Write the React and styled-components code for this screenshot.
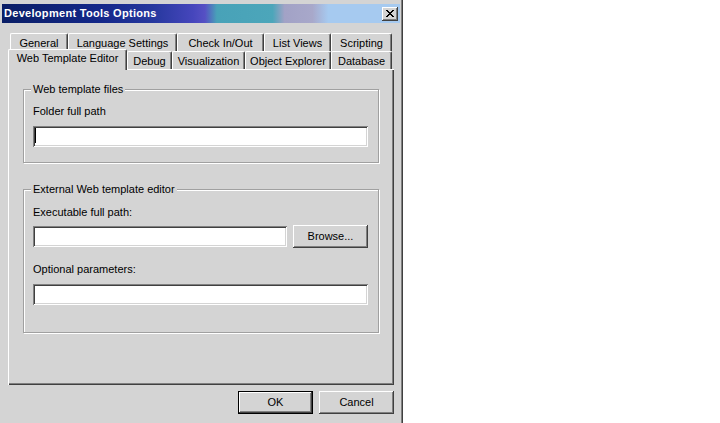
import React from "react";
import styled, { createGlobalStyle } from "styled-components";

const GRAY = "#d4d4d4";

const Global = createGlobalStyle`
  html, body { margin: 0; padding: 0; background: #fff; overflow: hidden; }
  body { font-family: "Liberation Sans", Arial, sans-serif; font-size: 11px; color: #000; }
`;

const Window = styled.div`
  box-sizing: border-box;
  width: 403px;
  height: 423px;
  background: ${GRAY};
  padding: 4px 3px 0 2px;
  box-shadow: inset -1px 0 #404040, inset -2px 0 #808080;
`;

const TitleBar = styled.div`
  height: 19px;
  display: flex;
  align-items: center;
  justify-content: space-between;
  padding: 0 2px;
  background: linear-gradient(
    90deg,
    #0a1e66 0%,
    #14288a 25%,
    #26389e 38%,
    #4646bc 48%,
    #5650c4 51%,
    #48a2b8 54%,
    #4ca6ba 68%,
    #a2a2c6 71%,
    #a8a8ca 78%,
    #a6caf0 82%,
    #a6caf0 100%
  );
`;

const TitleText = styled.span`
  color: #fff;
  font-weight: bold;
  font-size: 11px;
  letter-spacing: 0.3px;
  line-height: 13px;
  white-space: nowrap;
`;

const CloseButton = styled.div`
  width: 16px;
  height: 14px;
  box-sizing: border-box;
  background: ${GRAY};
  box-shadow: inset -1px -1px #404040, inset 1px 1px #fff, inset -2px -2px #808080;
  display: flex;
  align-items: center;
  justify-content: center;
  padding-right: 1px;
`;

const Body = styled.div`
  padding: 10px 6px 0 6px;
`;

const TabRow = styled.div`
  display: flex;
  align-items: flex-start;
  height: 18px;
  padding-left: 2px;
`;

const Tab = styled.div`
  box-sizing: border-box;
  flex: none;
  position: relative;
  width: ${(p) => (p.$active ? p.$w + 2 : p.$w)}px;
  height: ${(p) => (p.$active ? 21 : 18)}px;
  margin-top: ${(p) => (p.$active ? -2 : 0)}px;
  margin-left: ${(p) => (p.$active ? -2 : 0)}px;
  z-index: ${(p) => (p.$active ? 1 : 0)};
  background: ${GRAY};
  border-top: 1px solid #fff;
  border-left: 1px solid #fff;
  border-right: 1px solid #404040;
  box-shadow: inset -1px 0 #808080;
  border-radius: 2px 2px 0 0;
  padding-top: ${(p) => (p.$active ? 2 : 3)}px;
  text-align: center;
  line-height: 13px;
  white-space: nowrap;
`;

const Panel = styled.div`
  box-sizing: border-box;
  height: 316px;
  background: ${GRAY};
  box-shadow: inset 1px 1px #fff, inset -1px -1px #404040, inset -2px -2px #808080;
  padding: 20px 15px 0 15px;
`;

const Group = styled.div`
  box-sizing: border-box;
  width: 356px;
  border: 1px solid #a0a0a0;
  box-shadow: inset 1px 1px #fff, 1px 1px 0 #fff;
  padding: 0 10px ${(p) => p.$pb}px 9px;
  margin-top: ${(p) => p.$mt || 0}px;
`;

const Legend = styled.div`
  width: fit-content;
  margin: -7px 0 0 -2px;
  padding: 0 2px;
  background: ${GRAY};
  line-height: 13px;
  white-space: nowrap;
`;

const FieldLabel = styled.div`
  line-height: 13px;
  margin-top: ${(p) => p.$mt}px;
  white-space: nowrap;
`;

const FieldRow = styled.div`
  display: flex;
  align-items: center;
  gap: 6px;
  margin-top: ${(p) => p.$mt}px;
`;

const TextBox = styled.div`
  box-sizing: border-box;
  width: ${(p) => p.$w}px;
  height: 21px;
  margin-top: ${(p) => p.$mt || 0}px;
  background: #fff;
  box-shadow: inset 1px 1px #808080, inset -1px -1px #fff, inset 2px 2px #404040,
    inset -2px -2px ${GRAY};
  padding: 2px 0 0 2px;
`;

const Caret = styled.div`
  width: 1px;
  height: 15px;
  background: #000;
`;

const Button = styled.div`
  box-sizing: border-box;
  width: 75px;
  height: 23px;
  flex: none;
  background: ${GRAY};
  display: flex;
  align-items: center;
  justify-content: center;
  line-height: 13px;
  border: ${(p) => (p.$default ? "1px solid #000" : "none")};
  box-shadow: ${(p) =>
    p.$default
      ? "inset -1px -1px #404040, inset 1px 1px #fff, inset -2px -2px #808080"
      : "inset -1px -1px #404040, inset 1px 1px #fff, inset -2px -2px #808080"};
`;

const ButtonRow = styled.div`
  display: flex;
  justify-content: flex-end;
  gap: 6px;
  margin-top: 6px;
`;

const CloseGlyph = () => (
  <svg width="8" height="7" viewBox="0 0 8 7" shapeRendering="crispEdges">
    <path
      fill="#000"
      d="M0 0h2v1H0zM6 0h2v1H6zM1 1h2v1H1zM5 1h2v1H5zM2 2h4v1H2zM3 3h2v1H3zM2 4h4v1H2zM1 5h2v1H1zM5 5h2v1H5zM0 6h2v1H0zM6 6h2v1H6z"
    />
  </svg>
);

const backRow = [
  { label: "General", w: 58 },
  { label: "Language Settings", w: 109 },
  { label: "Check In/Out", w: 87 },
  { label: "List Views", w: 67 },
  { label: "Scripting", w: 61 },
];

const frontRow = [
  { label: "Web Template Editor", w: 117, active: true },
  { label: "Debug", w: 45 },
  { label: "Visualization", w: 73 },
  { label: "Object Explorer", w: 86 },
  { label: "Database", w: 61 },
];

export default function App() {
  return (
    <>
      <Global />
      <Window>
        <TitleBar>
          <TitleText>Development Tools Options</TitleText>
          <CloseButton>
            <CloseGlyph />
          </CloseButton>
        </TitleBar>
        <Body>
          <TabRow>
            {backRow.map((t) => (
              <Tab key={t.label} $w={t.w}>
                {t.label}
              </Tab>
            ))}
          </TabRow>
          <TabRow>
            {frontRow.map((t) => (
              <Tab key={t.label} $w={t.w} $active={t.active}>
                {t.label}
              </Tab>
            ))}
          </TabRow>
          <Panel>
            <Group $pb={15}>
              <Legend>Web template files</Legend>
              <FieldLabel $mt={9}>Folder full path</FieldLabel>
              <TextBox $w={335} $mt={8}>
                <Caret />
              </TextBox>
            </Group>
            <Group $pb={27} $mt={26}>
              <Legend>External Web template editor</Legend>
              <FieldLabel $mt={10}>Executable full path:</FieldLabel>
              <FieldRow $mt={6}>
                <TextBox $w={254} />
                <Button>Browse...</Button>
              </FieldRow>
              <FieldLabel $mt={15}>Optional parameters:</FieldLabel>
              <TextBox $w={335} $mt={8} />
            </Group>
          </Panel>
          <ButtonRow>
            <Button $default>OK</Button>
            <Button>Cancel</Button>
          </ButtonRow>
        </Body>
      </Window>
    </>
  );
}
